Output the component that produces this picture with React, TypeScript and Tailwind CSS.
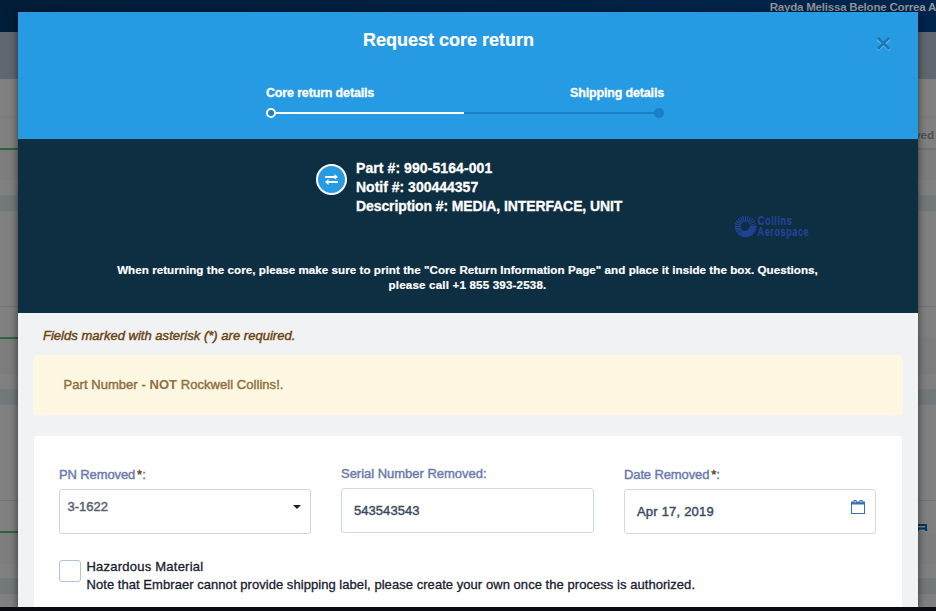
import React from "react";

const medium = "[-webkit-text-stroke:0.42px_currentColor]";
const heavy = "[-webkit-text-stroke:0.3px_currentColor]";

function BackgroundPage() {
  return (
    <div className="flex h-full flex-col bg-[#808080]">
      <div className="flex h-8 shrink-0 justify-end bg-gradient-to-r from-[#001d38] to-[#00254d] text-[11.5px] font-bold leading-[14px] tracking-[-0.2px] text-[#8f959c]">
        <span className="whitespace-nowrap">Rayda Melissa Belone Correa A</span>
      </div>
      <div className="h-[47px] shrink-0 bg-[#61676f]" />
      <div className="h-[39px] shrink-0 border-b border-[#797979]" />
      <div className="flex h-[30px] shrink-0 items-center justify-end pr-[2px] pt-[5px] text-[11.5px] font-bold text-[#515151]">
        Removed
      </div>
      <div className="flex h-[2px] shrink-0">
        <div className="w-1/2 bg-[#2d6340]" />
        <div className="w-1/2 bg-[#727272]" />
      </div>
      <div className="h-[30px] shrink-0 bg-[#7d7d7d]" />
      <div className="h-4 shrink-0 border-b border-[#747a7d]" />
      <div className="h-[15px] shrink-0 bg-[#73797b]" />
      <div className="h-[96px] shrink-0 border-b border-[#757575]" />
      <div className="h-[30px] shrink-0" />
      <div className="flex h-[2px] shrink-0">
        <div className="w-1/2 bg-[#2d6340]" />
        <div className="w-1/2 bg-[#7e7e7e]" />
      </div>
      <div className="h-[35px] shrink-0 bg-[#7d7d7d]" />
      <div className="h-4 shrink-0 border-b border-[#747a7d]" />
      <div className="h-[15px] shrink-0 bg-[#73797b]" />
      <div className="h-[96px] shrink-0 border-b border-[#757575]" />
      <div className="flex h-[30px] shrink-0 items-end justify-end pr-[8px]">
        <svg width="14" height="7" viewBox="0 0 14 7" fill="none" stroke="#003a66" strokeWidth="2">
          <path d="M4 7V4.4H12V1H2M10.5 4.5L13 7" />
        </svg>
      </div>
      <div className="h-[2px] w-1/2 shrink-0 bg-[#2d6340]" />
      <div className="h-[31px] shrink-0 bg-[#7d7d7d]" />
      <div className="h-[15px] shrink-0 border-b border-[#747a7d]" />
      <div className="h-[15px] shrink-0 bg-[#73797b]" />
      <div className="grow" />
      <div className="h-1 shrink-0 bg-[#080b12]" />
    </div>
  );
}

function CollinsLogo() {
  const rays = Array.from({ length: 24 }, (_, i) => i);
  return (
    <svg width="78" height="25" viewBox="0 0 78 25" className="shrink-0">
      <g fill="#23439b">
        {rays.map((i) => {
          const a = (i * 15 * Math.PI) / 180;
          const h = i < 12 ? 0.115 : 0.115 - (i - 11) * 0.004;
          const pt = (r: number, t: number) => `${(10.5 + r * Math.cos(t)).toFixed(2)},${(10.5 + r * Math.sin(t)).toFixed(2)}`;
          return <polygon key={i} points={[pt(4.6, a - h), pt(10.8, a - h * 0.75), pt(10.8, a + h * 0.75), pt(4.6, a + h)].join(" ")} />;
        })}
        <path d="M14.5 10.5H21A10.3 10.3 0 0 1 4 18.5L7.5 14.5A5 5 0 0 0 14.5 10.5Z" opacity="0.75" />
      </g>
      <g fill="#23439b" stroke="#23439b" strokeWidth="0.2" fontFamily="Liberation Sans, Arial, sans-serif" fontWeight="700">
        <text transform="translate(22.8 9) scale(0.76 1)" fontSize="12" letterSpacing="0.8">Collins</text>
        <text transform="translate(22.5 20) scale(0.76 1)" fontSize="12" letterSpacing="0.75">Aerospace</text>
      </g>
    </svg>
  );
}

function ModalHeader() {
  return (
    <header className="flex h-[127px] shrink-0 flex-col bg-[#279ae4] text-white">
      <div className="flex h-[62px] pt-[17px]">
        <h1 className="ml-[40px] w-[781px] text-center text-[18px] font-bold leading-[22px] [-webkit-text-stroke:0.2px_currentColor]">Request core return</h1>
        <button className="ml-[37px] mt-[7px] h-[15px] w-[15px]">
          <svg width="15" height="15" viewBox="0 0 15 15" fill="none" strokeWidth="2.6">
            <path d="M1.5 3.2L13.5 14.2M13.5 3.2L1.5 14.2" stroke="#5fb6ee" />
            <path d="M1.8 1.8L13.2 13M13.2 1.8L1.8 13" stroke="#1f78b3" />
          </svg>
        </button>
      </div>
      <div className="ml-[248px] w-[398px]">
        <div className={`flex h-[34px] items-start justify-between pt-[11px] text-[12.5px] font-bold leading-[16px] tracking-[-0.16px] ${heavy}`}>
          <span>Core return details</span>
          <span>Shipping details</span>
        </div>
        <div className="flex h-[10px] items-center">
          <span className="h-[10px] w-[10px] rounded-full border-2 border-white bg-[#1a7fc6]" />
          <span className="h-[2px] w-[188px] bg-white" />
          <span className="h-[2px] w-[191px] bg-[#1a7fc4]" />
          <span className="-ml-px h-[10px] w-[10px] rounded-full bg-[#1a7fc4]" />
        </div>
      </div>
    </header>
  );
}

function PartSummary() {
  return (
    <section className="flex h-[174px] shrink-0 flex-col bg-[#0e2e41] text-white">
      <div className="flex h-[117px] pl-[298px] pt-5">
        <span className="mt-[5px] flex h-[31px] w-[31px] shrink-0 items-center justify-center rounded-full border-2 border-white bg-[#279ae4]">
          <svg width="13" height="11" viewBox="0 0 13 11" fill="white">
            <path d="M0 2H9.5V0L13 3L9.5 5.5V4H0Z" />
            <path d="M13 7H3.5V5.2L0 8L3.5 11V9H13Z" />
          </svg>
        </span>
        <div className={`ml-[9px] w-[380px] text-[14px] font-bold leading-[19px] ${heavy}`}>
          <p className="tracking-[0.08px]">Part #: 990-5164-001</p>
          <p className="tracking-[0px]">Notif #: 300444357</p>
          <p className="tracking-[-0.1px]">Description #: MEDIA, INTERFACE, UNIT</p>
        </div>
        <div className="-ml-[1px] mt-[57px]">
          <CollinsLogo />
        </div>
      </div>
      <p className="-ml-px pt-[6px] text-center text-[11.6px] font-bold leading-[15px] tracking-[0.05px] [-webkit-text-stroke:0.2px_currentColor]">
        When returning the core, please make sure to print the "Core Return Information Page" and place it inside the box. Questions,
        <br />
        <span className="tracking-[0.17px]">please call +1 855 393-2538.</span>
      </p>
    </section>
  );
}

function Label({ children, required }: { children: string; required?: boolean }) {
  return (
    <div className={`flex h-[16px] text-[13px] leading-[16px] text-[#6b7aab] ${medium}`}>
      <span className={required ? "tracking-[-0.12px]" : "tracking-[-0.02px]"}>{children}</span>
      {required && <span className="ml-[2px] text-[#6b4410]">*</span>}
      <span>:</span>
    </div>
  );
}

function CoreForm() {
  return (
    <section className="mx-4 mt-[21px] flex grow flex-col rounded-t-[4px] bg-white pl-[25px]">
      <div className="flex gap-[30px] pt-[30px]">
        <div className="w-[252px] pt-px">
          <Label required>PN Removed</Label>
          <div className={`mt-[6px] flex h-[45px] items-start justify-between rounded-[3px] border border-[#cfd5e2] pl-[7.5px] pr-[9px] pt-[9px] text-[13px] leading-[16px] text-[#55606f] ${medium}`}>
            <span>3-1622</span>
            <span className="mt-[6px] border-x-4 border-t-4 border-x-transparent border-t-[#16222e]" />
          </div>
        </div>
        <div className="w-[253px]">
          <Label>Serial Number Removed</Label>
          <div className={`mt-[6px] flex h-[45px] items-center rounded-[3px] border border-[#cfd8e8] pl-[12px] text-[13px] tracking-[0.05px] text-[#3c4a61] ${medium}`}>
            543543543
          </div>
        </div>
        <div className="w-[252px] pt-px">
          <Label required>Date Removed</Label>
          <div className={`mt-[6px] flex h-[45px] items-center justify-between rounded-[3px] border border-[#d3d8e2] pl-[12px] pr-[10px] text-[13px] tracking-[0.2px] text-[#3c4a61] ${medium}`}>
            <span>Apr 17, 2019</span>
            <svg width="14" height="14" viewBox="0 0 14 14" className="mb-[9px]" fill="#3a6fb5">
              <path d="M0 1.5H14V14H0ZM1 4.5V13H13V4.5Z" fillRule="evenodd" />
              <path d="M2.5 0H5.5V2.5H2.5ZM8.5 0H11.5V2.5H8.5Z" />
              <path d="M3.5 1H4.5V2.5H3.5ZM9.5 1H10.5V2.5H9.5Z" fill="white" />
            </svg>
          </div>
        </div>
      </div>
      <div className="mt-[26px] flex text-[13px] leading-[18px] text-[#16202d] [-webkit-text-stroke:0.3px_currentColor]">
        <span className="h-[22px] w-[22px] rounded-[3px] border border-[#b2c2dd]" />
        <div className="-mt-[2px] ml-[5.5px]">
          <p className="tracking-[0.23px]">Hazardous Material</p>
          <p className="tracking-[0.05px]">Note that Embraer cannot provide shipping label, please create your own once the process is authorized.</p>
        </div>
      </div>
    </section>
  );
}

export default function App() {
  return (
    <div className="relative h-[611px] w-[936px] overflow-hidden font-['Liberation_Sans',Arial,sans-serif]">
      <BackgroundPage />
      <div className="absolute left-[18px] top-3 h-[595px] w-[900px] shadow-[0_2px_8px_rgba(0,0,0,0.6)] [clip-path:inset(-12px_-20px_0_-20px)]">
        <div className="flex h-full flex-col bg-[#f1f2f4]">
          <ModalHeader />
          <PartSummary />
          <p className={`ml-[25px] mt-[15px] text-[13px] italic leading-[16px] tracking-[0.02px] text-[#6b4410] ${medium}`}>
            Fields marked with asterisk (*) are required.
          </p>
          <div className={`mx-[15px] mt-[11px] flex h-[60px] shrink-0 items-center rounded-[4px] bg-[#fef7e2] pl-[30.5px] text-[13px] tracking-[0.05px] text-[#8d7040] ${medium}`}>
            <span>Part Number - <b className="[-webkit-text-stroke:0px]">NOT</b> Rockwell Collins!.</span>
          </div>
          <CoreForm />
        </div>
      </div>
    </div>
  );
}
